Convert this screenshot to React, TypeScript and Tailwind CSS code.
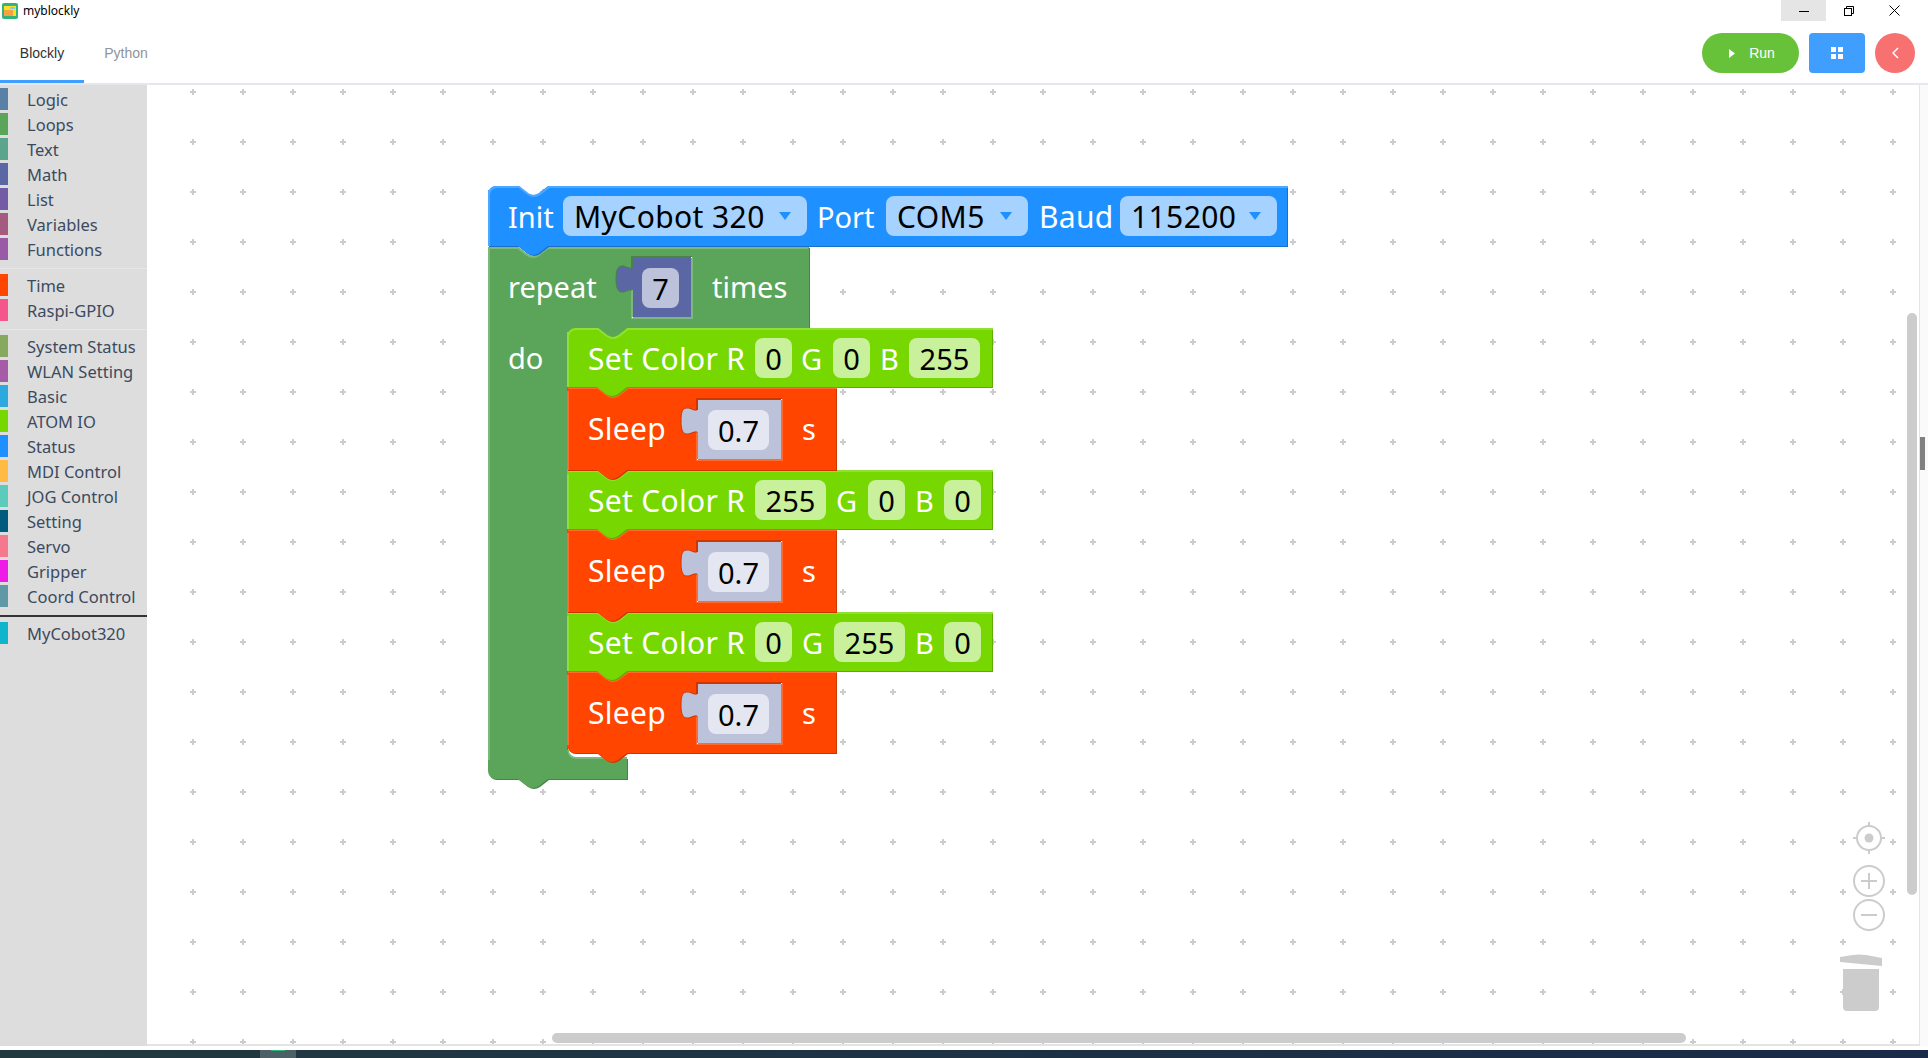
import React from "react";

const groups = [
  [
    ["Logic", "#5b80a5"],
    ["Loops", "#5ba55b"],
    ["Text", "#5ba58c"],
    ["Math", "#5b67a5"],
    ["List", "#745ba5"],
    ["Variables", "#a55b80"],
    ["Functions", "#995ba5"],
  ],
  [
    ["Time", "#ff4500"],
    ["Raspi-GPIO", "#f5568c"],
  ],
  [
    ["System Status", "#86a85f"],
    ["WLAN Setting", "#a65ba6"],
    ["Basic", "#2ea9df"],
    ["ATOM IO", "#77d700"],
    ["Status", "#1e90ff"],
    ["MDI Control", "#ffbb44"],
    ["JOG Control", "#5ccbbb"],
    ["Setting", "#005b7f"],
    ["Servo", "#f5788c"],
    ["Gripper", "#ee1ce6"],
    ["Coord Control", "#5f98a6"],
  ],
];

type Palette = { fill: string; dark: string; light: string };

const BLUE: Palette = { fill: "#1e90ff", dark: "#1870c8", light: "#4ea8ff" };
const LOOP: Palette = { fill: "#5ba55b", dark: "#488448", light: "#7cb77c" };
const LIME: Palette = { fill: "#77d700", dark: "#5fac00", light: "#92df33" };
const RED: Palette = { fill: "#ff4500", dark: "#cc3700", light: "#ff6a33" };

// notch going left to right along a top edge / right to left along a bottom edge
const notchR = "l 9 7 q 6 4 12 0 l 9 -7";
const notchL = "l -9 7 q -6 4 -12 0 l -9 -7";

function Label({ x, y, children, wide }: { x: number; y: number; children: React.ReactNode; wide?: boolean }) {
  return (
    <text x={x} y={y} fill="#fff" fontSize={wide ? 30 : 29} letterSpacing={wide ? 0.3 : 0}>
      {children}
    </text>
  );
}

function Field({ x, y, w, fill, text, arrow }: { x: number; y: number; w: number; fill: string; text: string; arrow?: boolean }) {
  return (
    <g>
      <rect x={x} y={y} width={w} height={40} rx={8} fill={fill} />
      {arrow ? (
        <>
          <text x={x + 11} y={y + 32} fontSize={30} letterSpacing={0.4} fill="#000">
            {text}
          </text>
          <path d={`M${x + w - 28} ${y + 16} h 12 l -6 8 z`} fill="#1e90ff" />
        </>
      ) : (
        <text x={x + w / 2} y={y + 32} fontSize={29} fill="#000" textAnchor="middle">
          {text}
        </text>
      )}
    </g>
  );
}

function Stack({ x, y, w, h, p, round, roundBottom, children }: { x: number; y: number; w: number; h: number; p: Palette; round?: boolean; roundBottom?: boolean; children: React.ReactNode }) {
  const top = round
    ? `M${x} ${y + 8} a 8 8 0 0 1 8 -8 h 22 ${notchR} H${x + w}`
    : `M${x} ${y} h 30 ${notchR} H${x + w}`;
  const bottom = roundBottom
    ? `V${y + h} H${x + 60} ${notchL} H${x + 8} a 8 8 0 0 1 -8 -8 z`
    : `V${y + h} H${x + 60} ${notchL} H${x} z`;
  const d = top + " " + bottom;
  return (
    <g>
      <path d={d} fill={p.dark} transform="translate(1 1)" />
      <path d={d} fill={p.fill} />
      <path d={top} fill="none" stroke={p.light} strokeWidth={2} transform="translate(1 1)" />
      <path d={`M${x + 1} ${y + 4} V${y + h - (roundBottom ? 8 : 0)}`} stroke={p.light} strokeWidth={2} />
      {children}
    </g>
  );
}

// puzzle tab + body of a value block plugged into a statement block
function Value({ x, y, w, h, fill, dark, light }: { x: number; y: number; w: number; h: number; fill: string; dark: string; light: string }) {
  const tab = `M${x} ${y + 11} c -4 1 -7 -3 -11 -2 c -4 1 -5 5 -5 13 c 0 7 1 12 5 13 c 4 1 7 -3 11 -2`;
  return (
    <g>
      <path d={`${tab} V${y + h} H${x + w} V${y} H${x} z`} fill={fill} />
      <path d={`M${x} ${y + 11} V${y} H${x + w}`} fill="none" stroke={dark} strokeWidth={2} />
      <path d={`M${x} ${y + 33} V${y + h} H${x + w} V${y}`} fill="none" stroke={light} strokeWidth={2} />
      <path d={tab} fill="none" stroke={dark} strokeWidth={1} />
      <rect x={x + w - 1} y={y} width={1} height={1} fill="#fff" />
      <rect x={x} y={y + h - 1} width={1} height={1} fill="#fff" />
    </g>
  );
}

function SetColor({ y, r, g, b, round }: { y: number; r: [number, string]; g: [number, number, string]; b: [number, number, string]; round?: boolean }) {
  const lime = "#c9f09a";
  return (
    <Stack x={567} y={y} w={425} h={59} p={LIME} round={round}>
      <Label x={588} y={y + 42} wide>
        Set Color R
      </Label>
      <Field x={755} y={y + 10} w={r[0]} fill={lime} text={r[1]} />
      <Label x={g[0] - 1} y={y + 42}>
        G
      </Label>
      <Field x={g[0] + 31} y={y + 10} w={g[1]} fill={lime} text={g[2]} />
      <Label x={b[0] - 2} y={y + 42}>
        B
      </Label>
      <Field x={b[0] + 27} y={y + 10} w={b[1]} fill={lime} text={b[2]} />
    </Stack>
  );
}

function Sleep({ y, roundBottom }: { y: number; roundBottom?: boolean }) {
  return (
    <Stack x={567} y={y} w={269} h={roundBottom ? 82 : 83} p={RED} roundBottom={roundBottom}>
      <Label x={588} y={y + 53} wide>
        Sleep
      </Label>
      <Value x={697} y={y + 12} w={85} h={61} fill="#bdc2db" dark="#cc3700" light="#ff6a33" />
      <Field x={708} y={y + 23} w={61} fill="#e4e6f1" text="0.7" />
      <Label x={802} y={y + 53}>
        s
      </Label>
    </Stack>
  );
}

function Workspace() {
  const repeat =
    "M488 255 V247 H518 " + notchR + " H809 V328 H627 " + notchL + " H575 a 8 8 0 0 0 -8 8 V750 a 8 8 0 0 0 8 8 H627 V779 H548 " + notchL + " H496 a 8 8 0 0 1 -8 -8 z";
  return (
    <svg className="absolute inset-0 h-full w-full font-['Noto_Sans',sans-serif]" viewBox="147 85 1772 959" fill="none">
      <defs>
        <pattern id="grid" x="168" y="67" width="50" height="50" patternUnits="userSpaceOnUse">
          <path d="M22 25 H28 M25 22 V28" stroke="#cccccc" strokeWidth={2} />
        </pattern>
      </defs>
      <rect x="147" y="85" width="1772" height="959" fill="url(#grid)" />

      {/* repeat block */}
      <path d={repeat} fill={LOOP.dark} transform="translate(1 1)" />
      <path d={repeat} fill={LOOP.fill} />
      <path d="M489 760 V248 H518 l 9 7 q 6 4 12 0 l 9 -7 H808" stroke={LOOP.light} strokeWidth={2} />
      <path d="M568 750 a 8 8 0 0 0 8 8 H627" stroke={LOOP.light} strokeWidth={2} />
      <Label x={508} y={298}>
        repeat
      </Label>
      <Value x={632} y={257} w={60} h={61} fill="#5b67a5" dark="#488448" light="#7cb77c" />
      <Field x={642} y={268} w={37} fill="#bdc2db" text="7" />
      <Label x={712} y={298}>
        times
      </Label>
      <Label x={508} y={369}>
        do
      </Label>

      {/* statements, last one first so every tab sits over the block below it */}
      <Sleep y={671} roundBottom />
      <SetColor y={612} r={[37, "0"]} g={[803, 71, "255"]} b={[917, 37, "0"]} />
      <Sleep y={529} />
      <SetColor y={470} r={[71, "255"]} g={[837, 37, "0"]} b={[917, 37, "0"]} />
      <Sleep y={387} />
      <SetColor y={328} r={[37, "0"]} g={[802, 37, "0"]} b={[882, 71, "255"]} round />

      {/* init block */}
      <Stack x={488} y={186} w={799} h={60} p={BLUE} round>
        <Label x={508} y={228}>
          Init
        </Label>
        <Field x={563} y={196} w={244} fill="#a5d2ff" text="MyCobot 320" arrow />
        <Label x={817} y={228}>
          Port
        </Label>
        <Field x={886} y={196} w={142} fill="#a5d2ff" text="COM5" arrow />
        <Label x={1039} y={228} wide>
          Baud
        </Label>
        <Field x={1120} y={196} w={157} fill="#a5d2ff" text="115200" arrow />
      </Stack>

      {/* centre + zoom controls */}
      <g stroke="#cccccc" strokeWidth={2}>
        <circle cx={1869} cy={838} r={12} />
        <path d="M1869 822 V827 M1869 849 V854 M1853 838 H1858 M1880 838 H1885" />
        <circle cx={1869} cy={881} r={15} />
        <path d="M1861 881 H1877 M1869 873 V889" />
        <circle cx={1869} cy={915} r={15} />
        <path d="M1861 915 H1877" />
      </g>
      <circle cx={1869} cy={838} r={4.5} fill="#cccccc" />

      {/* trash can */}
      <path d="M1840 957 L1853 955 Q1858 954 1866 955 L1882 958 V966 L1840 962 z" fill="#cccccc" />
      <path d="M1843 969 H1879 V1007 a 4 4 0 0 1 -4 4 H1847 a 4 4 0 0 1 -4 -4 z" fill="#cccccc" />
    </svg>
  );
}

export default function App() {
  return (
    <div className="flex h-[1058px] w-[1928px] flex-col overflow-hidden bg-white font-['Liberation_Sans',sans-serif]">
      {/* window title bar */}
      <div className="flex h-[21px] items-center">
        <svg className="ml-0.5 mr-[5px]" width="16" height="16" viewBox="0 0 16 16">
          <rect width="16" height="16" rx="2" fill="#2fb57a" />
          <rect x="2" y="3" width="12" height="10" fill="#fbe122" />
          <rect x="2" y="7" width="9" height="6" fill="#f4a340" />
          <rect x="8" y="4" width="5" height="2" fill="#8fc9e0" />
        </svg>
        <span className="pt-px font-['Noto_Sans',sans-serif] text-[12px] text-black">myblockly</span>
        <div className="ml-auto flex h-full pr-[10px]">
          <div className="flex h-full w-[45px] items-center justify-center bg-[#e5e5e5]">
            <svg width="10" height="10" viewBox="0 0 10 10">
              <path d="M0 5.5 H10" stroke="#000" />
            </svg>
          </div>
          <div className="flex h-full w-[45px] items-center justify-center">
            <svg width="10" height="10" viewBox="0 0 10 10" fill="none" stroke="#000">
              <rect x="0.5" y="2.5" width="7" height="7" />
              <path d="M2.5 2.5 V0.5 H9.5 V7.5 H7.5" />
            </svg>
          </div>
          <div className="flex h-full w-[47px] items-center justify-center">
            <svg width="11" height="11" viewBox="0 0 11 11" stroke="#000">
              <path d="M0.5 0.5 L10.5 10.5 M10.5 0.5 L0.5 10.5" />
            </svg>
          </div>
        </div>
      </div>

      {/* tabs and actions */}
      <div className="flex h-[64px] border-b-2 border-[#e4e7ed]">
        <div className="flex h-full w-[84px] items-center justify-center border-b-[3px] border-[#409eff] pt-[5px] text-[14px] text-[#303133]">Blockly</div>
        <div className="flex h-full w-[84px] items-center justify-center pt-[2px] text-[14px] text-[#909399]">Python</div>
        <div className="ml-auto flex gap-[10px] pr-[13px] pt-[12px]">
          <div className="flex h-10 w-[97px] items-center justify-center gap-[13px] rounded-full bg-[#67c23a] pl-[3px] text-[14px] text-white">
            <svg width="7" height="9" viewBox="0 0 7 9">
              <path d="M0 0 L6 4.5 L0 9 z" fill="#fff" />
            </svg>
            Run
          </div>
          <div className="flex h-10 w-[56px] items-center justify-center rounded bg-[#409eff]">
            <svg width="12" height="12" viewBox="0 0 12 12" fill="#fff">
              <rect width="5" height="5" />
              <rect x="7" width="5" height="5" />
              <rect y="7" width="5" height="5" />
              <rect x="7" y="7" width="5" height="5" />
            </svg>
          </div>
          <div className="flex h-10 w-10 items-center justify-center rounded-full bg-[#f87171]">
            <svg width="7" height="12" viewBox="0 0 7 12" fill="none" stroke="#fff" strokeWidth="1.5">
              <path d="M6 1 L1 6 L6 11" />
            </svg>
          </div>
        </div>
      </div>

      <div className="flex h-[961px]">
        {/* toolbox */}
        <div className="w-[147px] bg-[#dddddd] pt-[3px] font-['Noto_Sans',sans-serif] text-[16.5px] text-[#3b4a60]">
          {groups.map((g, i) => (
            <div key={i} className={i < 2 ? "mb-[5px] flex flex-col border-b border-[#e6e6e6] pb-[5px]" : "flex flex-col pb-[5px]"}>
              {g.map(([name, color]) => (
                <div key={name} className="flex h-[25px] items-start">
                  <div className="h-[22px] w-2" style={{ backgroundColor: color }} />
                  <span className="ml-[19px] leading-[24px]">{name}</span>
                </div>
              ))}
            </div>
          ))}
          <div className="mb-[5px] h-0.5 bg-[#333333]" />
          <div className="flex h-[25px] items-start">
            <div className="h-[22px] w-2 bg-[#10b5cc]" />
            <span className="ml-[19px] leading-[24px]">MyCobot320</span>
          </div>
        </div>

        {/* workspace */}
        <div className="relative w-[1773px] border-r border-b-2 border-[#e4e4e4]">
          <Workspace />
          <div className="absolute left-[405px] top-[948px] h-2.5 w-[1134px] rounded-full bg-[#cccccc]" />
          <div className="absolute left-[1760px] top-[228px] h-[582px] w-2.5 rounded-full bg-[#cccccc]" />
        </div>

        <div className="relative flex-1 bg-[#fafafa]">
          <div className="absolute left-0 top-[352px] h-[33px] w-[5px] bg-[#808080]" />
        </div>
      </div>

      {/* taskbar peeking in at the bottom */}
      <div className="mt-1 flex h-2 flex-1 bg-gradient-to-r from-[#22393f] to-[#1a2a48] pl-[260px]">
        <div className="flex h-full w-9 justify-center bg-[#4d6066]">
          <div className="h-px w-3.5 bg-[#2fb57a]" />
        </div>
      </div>
    </div>
  );
}
